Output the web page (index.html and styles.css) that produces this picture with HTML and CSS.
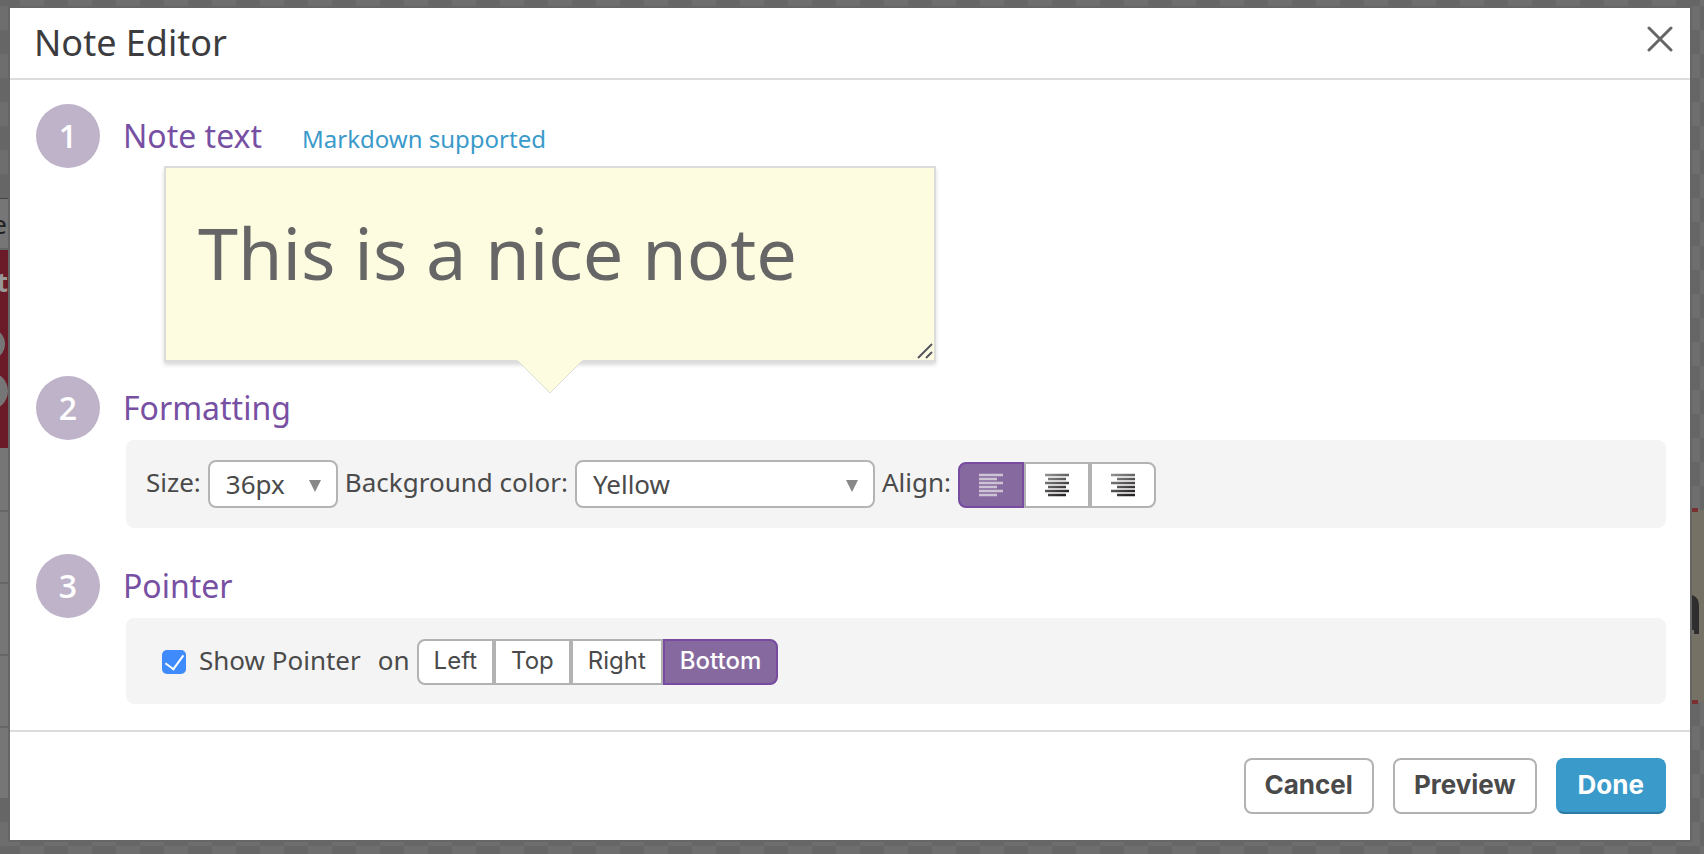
FILE: index.html
```html
<!DOCTYPE html>
<html lang="en">
<head>
<meta charset="utf-8">
<title>Note Editor</title>
<link rel="stylesheet" href="styles.css">
</head>
<body>
<div class="canvas" aria-hidden="true">
  <div class="table-edge">
    <div class="cell cell-title">e</div>
    <div class="cell cell-red"><span>t</span><i class="dot"></i><i class="dot dot-large"></i></div>
    <div class="cell"></div>
    <div class="cell"></div>
    <div class="cell"></div>
    <div class="cell"></div>
    <div class="cell"></div>
  </div>
  <div class="sticky-edge">
    <svg viewBox="0 0 12 196" width="12" height="196">
      <path d="M0 2H12V194H0Z" fill="#757265"/>
      <path d="M0 0H6V4H0ZM0 192H6V196H0Z" fill="#7a2f31"/>
      <path d="M0 87Q7 89 7 98V126H2V122H0Z" fill="#2e2e2e"/>
    </svg>
  </div>
</div>
<main class="dialog" role="dialog" aria-labelledby="dialog-title">
  <header class="dialog-header">
    <h1 id="dialog-title">Note Editor</h1>
    <button class="close" type="button" aria-label="Close">
      <svg viewBox="0 0 26 26" width="26" height="26"><path d="M2 2L24 24M24 2L2 24" stroke="#666" stroke-width="3" stroke-linecap="round"/></svg>
    </button>
  </header>
  <div class="dialog-body">
    <section class="step">
      <span class="number">1</span>
      <div class="step-heading">
        <h2><label for="note">Note text</label></h2>
        <a href="#markdown">Markdown supported</a>
      </div>
      <div class="note">
        <textarea id="note" spellcheck="false">This is a nice note</textarea>
        <svg class="grip" viewBox="0 0 16 16" width="16" height="16"><path d="M1 15L15 1M9 15L15 9" stroke="#fff" stroke-width="3"/><path d="M1 15L15 1M9 15L15 9" stroke="#555" stroke-width="2"/></svg>
        <svg class="tail" viewBox="0 0 66 34" width="66" height="34"><path d="M0 0H66L33 33Z" fill="#fefce0"/><path d="M1 1L33 33L65 1" fill="none" stroke="#dcdcdc" stroke-width="1"/></svg>
      </div>
    </section>
    <section class="step">
      <span class="number">2</span>
      <div class="step-heading"><h2>Formatting</h2></div>
      <div class="panel">
        <label class="text" for="size">Size:</label>
        <span class="select select-small">
          <select id="size"><option>36px</option></select>
          <svg viewBox="0 0 12 12" width="12" height="12"><path d="M0 0H12L6 12Z" fill="#888"/></svg>
        </span>
        <label class="text" for="color">Background color:</label>
        <span class="select select-large">
          <select id="color"><option>Yellow</option></select>
          <svg viewBox="0 0 12 12" width="12" height="12"><path d="M0 0H12L6 12Z" fill="#888"/></svg>
        </span>
        <span class="text" id="align-label">Align:</span>
        <div class="group group-low" role="group" aria-labelledby="align-label">
          <button class="icon active" type="button" aria-label="Align left">
            <svg viewBox="0 0 24 24" width="24" height="24"><path d="M0 2H24M0 6H18M0 10H24M0 14H18M0 18H24M0 22H18" stroke="#cdc3d5" stroke-width="2.6"/></svg>
          </button>
          <button class="icon" type="button" aria-label="Align center">
            <svg viewBox="0 0 24 24" width="24" height="24"><defs><linearGradient id="ink" gradientUnits="userSpaceOnUse" x1="0" y1="0" x2="14" y2="24"><stop offset="0" stop-color="#999"/><stop offset="1" stop-color="#292425"/></linearGradient></defs><path d="M0 2H24M3 6H21M0 10H24M3 14H21M0 18H24M3 22H21" stroke="url(#ink)" stroke-width="2.6"/></svg>
          </button>
          <button class="icon" type="button" aria-label="Align right">
            <svg viewBox="0 0 24 24" width="24" height="24"><path d="M0 2H24M6 6H24M0 10H24M6 14H24M0 18H24M6 22H24" stroke="url(#ink)" stroke-width="2.6"/></svg>
          </button>
        </div>
      </div>
    </section>
    <section class="step">
      <span class="number">3</span>
      <div class="step-heading"><h2>Pointer</h2></div>
      <div class="panel panel-pointer">
        <input id="show" type="checkbox" checked>
        <label class="text show-label" for="show">Show Pointer</label>
        <span class="text" id="side-label">on</span>
        <div class="group" role="group" aria-labelledby="side-label">
          <button type="button">Left</button>
          <button type="button">Top</button>
          <button type="button">Right</button>
          <button class="active" type="button">Bottom</button>
        </div>
      </div>
    </section>
  </div>
  <footer class="dialog-footer">
    <button type="button">Cancel</button>
    <button type="button">Preview</button>
    <button class="primary" type="button">Done</button>
  </footer>
</main>
</body>
</html>
```

FILE: styles.css
```css
* { box-sizing: border-box; }

body {
  margin: 0;
  min-height: 100vh;
  padding: 8px 14px 14px 10px;
  display: flex;
  position: relative;
  overflow: hidden;
  color: #4a4a4a;
  font: 26px/36px "Noto Sans", sans-serif;
  background: conic-gradient(#6e6e6e 25%, #666 0 50%, #6e6e6e 0 75%, #666 0) 20px 6px / 48px 48px;
}

button, select, textarea { font: inherit; color: inherit; margin: 0; }
button { cursor: pointer; }
svg { display: block; }

.canvas { position: absolute; inset: 0; overflow: hidden; }

.table-edge {
  position: absolute;
  top: 198px;
  left: 0;
  width: 8px;
  display: flex;
  flex-direction: column;
  overflow: hidden;
}

.cell { height: 72px; flex: none; background: #767676; border-bottom: 2px solid #666; }
.cell:nth-child(3) { height: 64px; }
.cell-title {
  height: 52px;
  color: #222;
  font-size: 26px;
  line-height: 50px;
  display: flex;
  justify-content: flex-end;
  padding-right: 1px;
  border-top: 1px solid #444;
}
.cell-red {
  height: 198px;
  border: 0;
  background: #6b1a27;
  color: #999;
  font-weight: 700;
  display: flex;
  flex-direction: column;
  align-items: flex-end;
}
.cell-red span { line-height: 64px; height: 78px; }
.dot { width: 32px; height: 32px; margin-right: 3px; border-radius: 50%; background: #767676; flex: none; }
.dot-large { width: 38px; height: 38px; margin: 12px 0 0; }

.sticky-edge { position: absolute; top: 508px; right: 0; }

.dialog {
  position: relative;
  flex: 1;
  display: flex;
  flex-direction: column;
  background: #fff;
  box-shadow: 0 0 0 2px #666;
}

.dialog-header {
  display: flex;
  align-items: flex-start;
  justify-content: space-between;
  padding: 10px 17px 10px 24px;
  border-bottom: 2px solid #dcdcdc;
}
.dialog-header h1 { margin: 0; color: #3c3c3f; font-size: 36px; line-height: 50px; font-weight: 400; }
.close { padding: 8px 0; border: 0; background: none; }

.dialog-body {
  flex: 1;
  display: flex;
  flex-direction: column;
  gap: 26px;
  padding: 24px 24px 26px 26px;
}

.step { display: grid; grid-template-columns: 64px 1fr; column-gap: 23px; }
.step:first-child { margin-bottom: -12px; }

.number {
  width: 64px;
  height: 64px;
  border-radius: 50%;
  background: #beb3c9;
  color: #fff;
  font-family: "Open Sans", "Noto Sans", sans-serif;
  font-size: 32px;
  font-weight: 600;
  line-height: 64px;
  text-align: center;
}

.step-heading { display: flex; align-items: baseline; gap: 40px; height: 64px; line-height: 64px; }
.step-heading h2 { margin: 0; color: #7750a3; font-size: 32px; font-weight: 400; }
.step-heading a { color: #3a9aca; font-size: 24px; text-decoration: none; }

.note { grid-column: 2; position: relative; width: 772px; max-width: 100%; margin: -2px 0 0 41px; }
.note textarea {
  display: block;
  width: 100%;
  height: 196px;
  padding: 35px 32px;
  border: 2px solid #dcdcdc;
  border-radius: 0;
  outline: 0;
  resize: none;
  overflow: hidden;
  background: #fefce0;
  color: #666;
  font-size: 72px;
  line-height: 98px;
  box-shadow: 0 3px 4px rgba(0, 0, 0, .15);
}
.grip { position: absolute; right: 3px; bottom: 3px; }
.tail { position: absolute; left: 50%; top: 100%; margin: -2px 0 0 -33px; }

.panel {
  grid-column: 2;
  display: flex;
  align-items: center;
  gap: 7px;
  margin-left: 3px;
  padding: 20px;
  border-radius: 8px;
  background: #f4f4f4;
}
.panel-pointer { padding: 21px 20px 19px 36px; }
.text { padding-bottom: 4px; }

.select { position: relative; }
.select select {
  display: block;
  appearance: none;
  width: 100%;
  height: 48px;
  padding: 0 16px;
  border: 2px solid #b4b4b4;
  border-radius: 8px;
  background: #fff;
}
.select svg { position: absolute; right: 17px; top: 20px; pointer-events: none; }
.select-small { width: 130px; }
.select-large { width: 300px; }

.group { display: flex; }
.group-low { padding-top: 2px; }
.group button {
  height: 46px;
  padding: 0 15px 2px;
  border: 2px solid #b2b2b2;
  background: #fff;
  font: 24px/32px Inter, sans-serif;
}
.group button:first-child { border-radius: 8px 0 0 8px; }
.group button:last-child { border-radius: 0 8px 8px 0; }
.group .icon { width: 66px; padding: 0 19px; }
.group .active { border-color: #774b9f; background: #866a9f; color: #fff; font-weight: 500; }

#show {
  appearance: none;
  width: 24px;
  height: 24px;
  margin: 0 6px 0 0;
  border-radius: 5px;
  background: #3f8bfb;
  display: grid;
  place-items: center;
}
#show:checked::before {
  content: "";
  width: 9px;
  height: 16px;
  margin-bottom: 4px;
  border: solid #fff;
  border-width: 0 2px 2px 0;
  rotate: 36deg;
}
.show-label { margin-right: 10px; }

.dialog-footer {
  display: flex;
  justify-content: flex-end;
  gap: 19px;
  padding: 26px 24px;
  border-top: 2px solid #dcdcdc;
}
.dialog-footer button {
  height: 56px;
  padding: 0 19px 2px;
  border: 2px solid #b2b2b2;
  border-radius: 8px;
  background: #fff;
  font: 700 26px/36px Inter, sans-serif;
}
.dialog-footer .primary {
  padding: 0 20px 2px;
  border-color: #3a9aca #3a9aca #2c7ba4;
  background: #3a9aca;
  color: #fff;
}
```
